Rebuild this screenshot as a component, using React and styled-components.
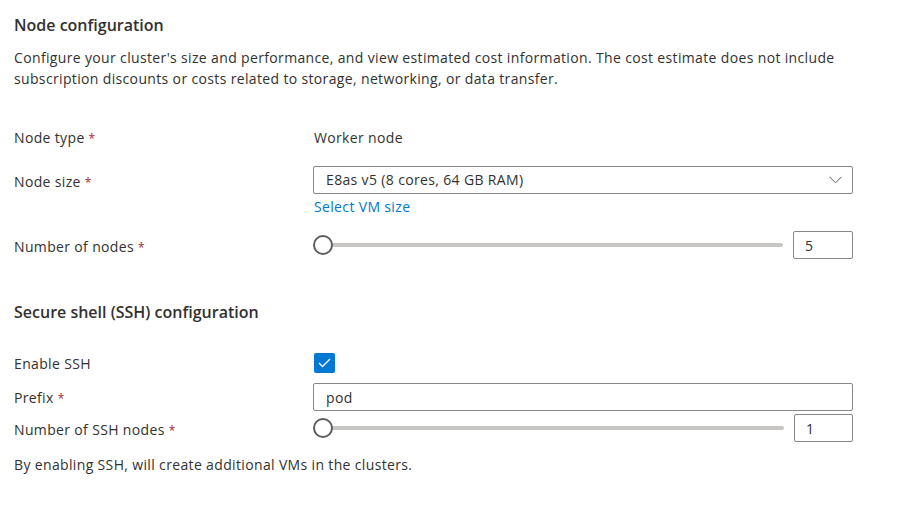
import React from 'react';
import styled, { createGlobalStyle } from 'styled-components';

const GlobalStyle = createGlobalStyle`
  html, body {
    margin: 0;
    padding: 0;
    background: #ffffff;
  }
  body {
    font-family: 'Segoe UI', 'Open Sans', sans-serif;
    color: #323130;
    font-size: 14px;
    letter-spacing: 0.35px;
  }
`;

const Page = styled.div`
  width: 912px;
  padding: 14px 0 0 14px;
  box-sizing: border-box;
`;

const Heading = styled.h2`
  margin: ${props => props.$top || 0}px 0 0;
  font-size: 16px;
  font-weight: 600;
  line-height: 22px;
  letter-spacing: 0;
`;

const Description = styled.p`
  margin: 11px 0 0;
  width: 860px;
  font-size: 14px;
  line-height: 21px;
`;

const Row = styled.div`
  display: grid;
  grid-template-columns: 299px 540px;
  align-items: start;
  margin-top: ${props => props.$top}px;
`;

const Label = styled.div`
  font-size: 14px;
  line-height: 20px;
  padding-top: ${props => props.$pad || 0}px;
`;

const Required = styled.span`
  color: #a4262c;
  margin-left: 4px;
  font-size: 12px;
`;

const Value = styled.div`
  padding-left: 1px;
  padding-top: 1px;
  line-height: 20px;
`;

const Field = styled.div`
  display: flex;
  flex-direction: column;
`;

const Select = styled.div`
  height: 28px;
  box-sizing: border-box;
  border: 1px solid #8a8886;
  border-radius: 2px;
  display: flex;
  align-items: center;
  justify-content: space-between;
  padding: 0 10px 0 12px;
  line-height: 20px;
`;

const Link = styled.a`
  color: #0078d4;
  text-decoration: none;
  line-height: 20px;
  margin-top: 3px;
  padding-left: 1px;
  cursor: pointer;
`;

const TextInput = styled.div`
  height: 28px;
  box-sizing: border-box;
  border: 1px solid #8a8886;
  border-radius: 2px;
  display: flex;
  align-items: center;
  padding: 0 12px;
`;

const SliderRow = styled.div`
  display: flex;
  align-items: center;
  gap: 10px;
`;

const Slider = styled.div`
  position: relative;
  flex: 1;
  height: 28px;
  display: flex;
  align-items: center;
`;

const Track = styled.div`
  margin-left: 10px;
  flex: 1;
  height: 4px;
  border-radius: 2px;
  background: #c8c6c4;
`;

const Thumb = styled.div`
  position: absolute;
  left: 0;
  top: 50%;
  width: 20px;
  height: 20px;
  margin-top: -10px;
  box-sizing: border-box;
  border-radius: 50%;
  border: 2px solid #605e5c;
  background: #ffffff;
`;

const NumberBox = styled.div`
  width: ${props => props.$width}px;
  height: 28px;
  box-sizing: border-box;
  border: 1px solid #8a8886;
  border-radius: 2px;
  display: flex;
  align-items: center;
  padding-left: 11px;
`;

const Checkbox = styled.div`
  width: 21px;
  height: 20px;
  margin-left: 1px;
  border-radius: 2px;
  background: #0078d4;
  display: flex;
  align-items: center;
  justify-content: center;
`;

const Note = styled.p`
  margin: 13px 0 0;
  line-height: 20px;
`;

const Chevron = () => (
  <svg width="13" height="8" viewBox="0 0 13 8" fill="none">
    <polyline points="0.5,0.8 6.5,6.8 12.5,0.8" stroke="#605e5c" strokeWidth="1" />
  </svg>
);

const Check = () => (
  <svg width="13" height="10" viewBox="0 0 13 10" fill="none">
    <polyline points="1,5 4.5,8.5 12,1" stroke="#ffffff" strokeWidth="1.3" />
  </svg>
);

const RangeField = ({ value, boxWidth }) => (
  <SliderRow>
    <Slider>
      <Track />
      <Thumb />
    </Slider>
    <NumberBox $width={boxWidth}>{value}</NumberBox>
  </SliderRow>
);

const FieldLabel = ({ children, required, pad }) => (
  <Label $pad={pad}>
    {children}
    {required && <Required>*</Required>}
  </Label>
);

const App = () => (
  <Page>
    <GlobalStyle />
    <Heading>Node configuration</Heading>
    <Description>
      Configure your cluster's size and performance, and view estimated cost information. The cost estimate does not include
      <br />
      subscription discounts or costs related to storage, networking, or data transfer.
    </Description>

    <Row $top={38}>
      <FieldLabel required pad={1}>Node type</FieldLabel>
      <Value>Worker node</Value>
    </Row>

    <Row $top={17}>
      <FieldLabel required pad={6}>Node size</FieldLabel>
      <Field>
        <Select>
          <span>E8as v5 (8 cores, 64 GB RAM)</span>
          <Chevron />
        </Select>
        <Link>Select VM size</Link>
      </Field>
    </Row>

    <Row $top={14}>
      <FieldLabel required pad={6}>Number of nodes</FieldLabel>
      <RangeField value="5" boxWidth={60} />
    </Row>

    <Heading $top={42}>Secure shell (SSH) configuration</Heading>

    <Row $top={30}>
      <FieldLabel pad={1}>Enable SSH</FieldLabel>
      <Checkbox>
        <Check />
      </Checkbox>
    </Row>

    <Row $top={9}>
      <FieldLabel required pad={5}>Prefix</FieldLabel>
      <TextInput>pod</TextInput>
    </Row>

    <Row $top={3}>
      <FieldLabel required pad={6}>Number of SSH nodes</FieldLabel>
      <RangeField value="1" boxWidth={59} />
    </Row>

    <Note>By enabling SSH, will create additional VMs in the clusters.</Note>
  </Page>
);

export default App;
